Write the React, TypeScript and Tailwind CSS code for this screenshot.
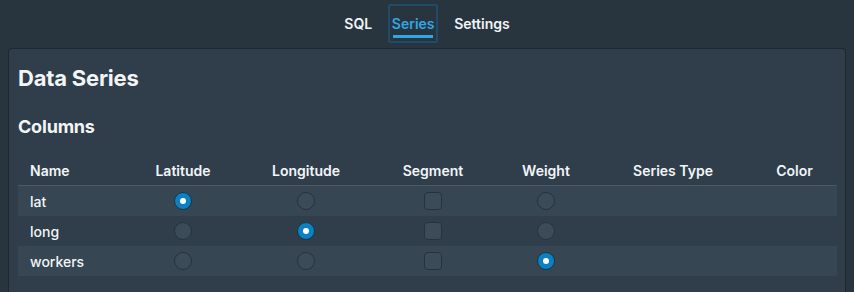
import React from "react";

const cols = ["Name", "Latitude", "Longitude", "Segment", "Weight", "Series Type", "Color"];

type Row = { name: string; sel: "lat" | "long" | "weight" };
const rows: Row[] = [
  { name: "lat", sel: "lat" },
  { name: "long", sel: "long" },
  { name: "workers", sel: "weight" },
];

function Radio({ on }: { on: boolean }) {
  return on ? (
    <div className="w-[18px] h-[18px] rounded-full bg-[#0b80c2] border border-[#1e3442] flex items-center justify-center">
      <div className="w-[6px] h-[6px] rounded-full bg-white" />
    </div>
  ) : (
    <div className="w-[18px] h-[18px] rounded-full bg-[#3b4c58] border border-[#26333c]" />
  );
}

function Check() {
  return <div className="w-[18px] h-[18px] rounded-[4px] bg-[#3b4c58] border border-[#26333c]" />;
}

export default function App() {
  return (
    <div
      className="w-[854px] h-[292px] overflow-hidden bg-[#28353f] text-[#f2f5f7]"
      style={{ fontFamily: "Inter, 'Liberation Sans', sans-serif" }}
    >
      <div className="h-[48px] flex justify-center items-start pt-[4px] gap-[8px] text-[14px] font-semibold">
        <div className="h-[39px] px-[8px] flex items-center">SQL</div>
        <div className="h-[39px] w-[50px] border-2 border-[#1e4d68] rounded-[2px] flex flex-col items-center justify-center relative text-[#2ea8e5]">
          <span>Series</span>
          <div className="absolute left-[3px] right-[3px] bottom-[3px] h-[3px] bg-[#2ea8e5]" />
        </div>
        <div className="h-[39px] px-[8px] flex items-center">Settings</div>
      </div>
      <div className="ml-[8px] w-[838px] h-[260px] bg-[#2f3e4a] border border-[#1d2830] border-b-0 rounded-t-[4px] px-[9px]">
        <div className="pt-[14px] text-[22px] font-bold leading-[30px] tracking-[-0.2px]">Data Series</div>
        <div className="mt-[22px] text-[18px] font-bold leading-[24px] tracking-[-0.2px]">Columns</div>
        <div className="mt-[17px] w-[819px] text-[14px]">
          <div className="grid grid-cols-[104px_122px_124px_130px_96px_158px_1fr] h-[30px] items-center font-semibold border-b border-[#4a5965]">
            {cols.map((c, i) => (
              <div key={c} className={i === 0 ? "pl-[12px]" : "text-center"}>
                {c}
              </div>
            ))}
          </div>
          {rows.map((r, idx) => (
            <div
              key={r.name}
              className={`grid grid-cols-[104px_122px_124px_130px_96px_158px_1fr] h-[30px] items-center ${
                idx % 2 === 0 ? "bg-[#364653]" : "bg-[#2f3e4a]"
              }`}
            >
              <div className="pl-[12px] font-medium">{r.name}</div>
              <div className="flex justify-center"><Radio on={r.sel === "lat"} /></div>
              <div className="flex justify-center"><Radio on={r.sel === "long"} /></div>
              <div className="flex justify-center"><Check /></div>
              <div className="flex justify-center"><Radio on={r.sel === "weight"} /></div>
              <div />
              <div />
            </div>
          ))}
        </div>
      </div>
    </div>
  );
}
